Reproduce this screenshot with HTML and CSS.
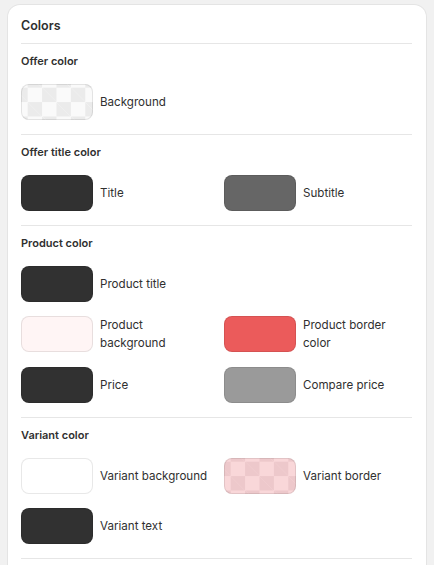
FILE: index.html
```html
<!DOCTYPE html>
<html>
<head>
<meta charset="utf-8">
<link rel="stylesheet" href="styles.css">
</head>
<body>
<div class="card">
  <div class="card-header">Colors</div>

  <div class="section">
    <div class="section-title">Offer color</div>
    <div class="grid">
      <div class="item"><span class="swatch checker"></span><span class="label">Background</span></div>
    </div>
  </div>

  <div class="section">
    <div class="section-title">Offer title color</div>
    <div class="grid">
      <div class="item"><span class="swatch dark"></span><span class="label">Title</span></div>
      <div class="item"><span class="swatch gray"></span><span class="label">Subtitle</span></div>
    </div>
  </div>

  <div class="section">
    <div class="section-title">Product color</div>
    <div class="grid">
      <div class="item"><span class="swatch dark"></span><span class="label">Product title</span></div>
      <div class="item"></div>
      <div class="item"><span class="swatch blush"></span><span class="label">Product<br>background</span></div>
      <div class="item"><span class="swatch red"></span><span class="label">Product border<br>color</span></div>
      <div class="item"><span class="swatch dark"></span><span class="label">Price</span></div>
      <div class="item"><span class="swatch silver"></span><span class="label">Compare price</span></div>
    </div>
  </div>

  <div class="section">
    <div class="section-title">Variant color</div>
    <div class="grid">
      <div class="item"><span class="swatch white"></span><span class="label">Variant background</span></div>
      <div class="item"><span class="swatch checker pink"></span><span class="label">Variant border</span></div>
      <div class="item"><span class="swatch dark"></span><span class="label">Variant text</span></div>
    </div>
  </div>
</div>
</body>
</html>
```

FILE: styles.css
```css
* { box-sizing: border-box; }
html, body { margin: 0; }
body {
  background: #f1f1f1;
  padding: 5px 8px 0 8px;
  font-family: Inter, "Noto Sans", sans-serif;
  color: #303030;
  height: 565px;
  overflow: hidden;
}
.card {
  background: #fff;
  border-radius: 12px;
  box-shadow: 0 0 0 1px rgba(0,0,0,0.05), 0 1px 0 rgba(0,0,0,0.04);
  padding: 0 14px 0 13px;
  height: 580px;
}
.card-header {
  font-size: 12.5px;
  font-weight: 600;
  line-height: 20px;
  padding: 11px 0 7px;
  border-bottom: 1px solid #e6e6e6;
}
.section {
  padding: 9px 0 14px;
  border-bottom: 1px solid #e6e6e6;
}
.section-title {
  font-size: 11px;
  font-weight: 600;
  line-height: 16px;
}
.grid {
  margin-top: 15px;
  display: grid;
  grid-template-columns: 1fr 1fr;
  column-gap: 15px;
  row-gap: 14.4px;
}
.item {
  display: flex;
  align-items: center;
  gap: 7px;
  min-height: 36px;
}
.swatch {
  flex: none;
  width: 72px;
  height: 36px;
  border-radius: 8px;
  border: 1px solid rgba(0,0,0,0.09);
}
.label {
  font-size: 11.6px;
  line-height: 18px;
}
.dark { background: #313131; }
.gray { background: #666666; }
.silver { background: #9a9a9a; }
.red { background: #eb5b5b; }
.blush { background: #fff5f5; }
.white { background: #fff; }
.checker {
  background-color: #fafafa;
  background-image:
    linear-gradient(45deg, #ebebeb 25%, transparent 25%, transparent 75%, #ebebeb 75%),
    linear-gradient(45deg, #ebebeb 25%, transparent 25%, transparent 75%, #ebebeb 75%);
  background-size: 28.8px 28.8px;
  background-position: 5.7px 2.7px, 20.1px 17.1px;
}
.checker.pink {
  background-color: #f9d7d9;
  background-image:
    linear-gradient(45deg, #edc8cb 25%, transparent 25%, transparent 75%, #edc8cb 75%),
    linear-gradient(45deg, #edc8cb 25%, transparent 25%, transparent 75%, #edc8cb 75%);
}
```
